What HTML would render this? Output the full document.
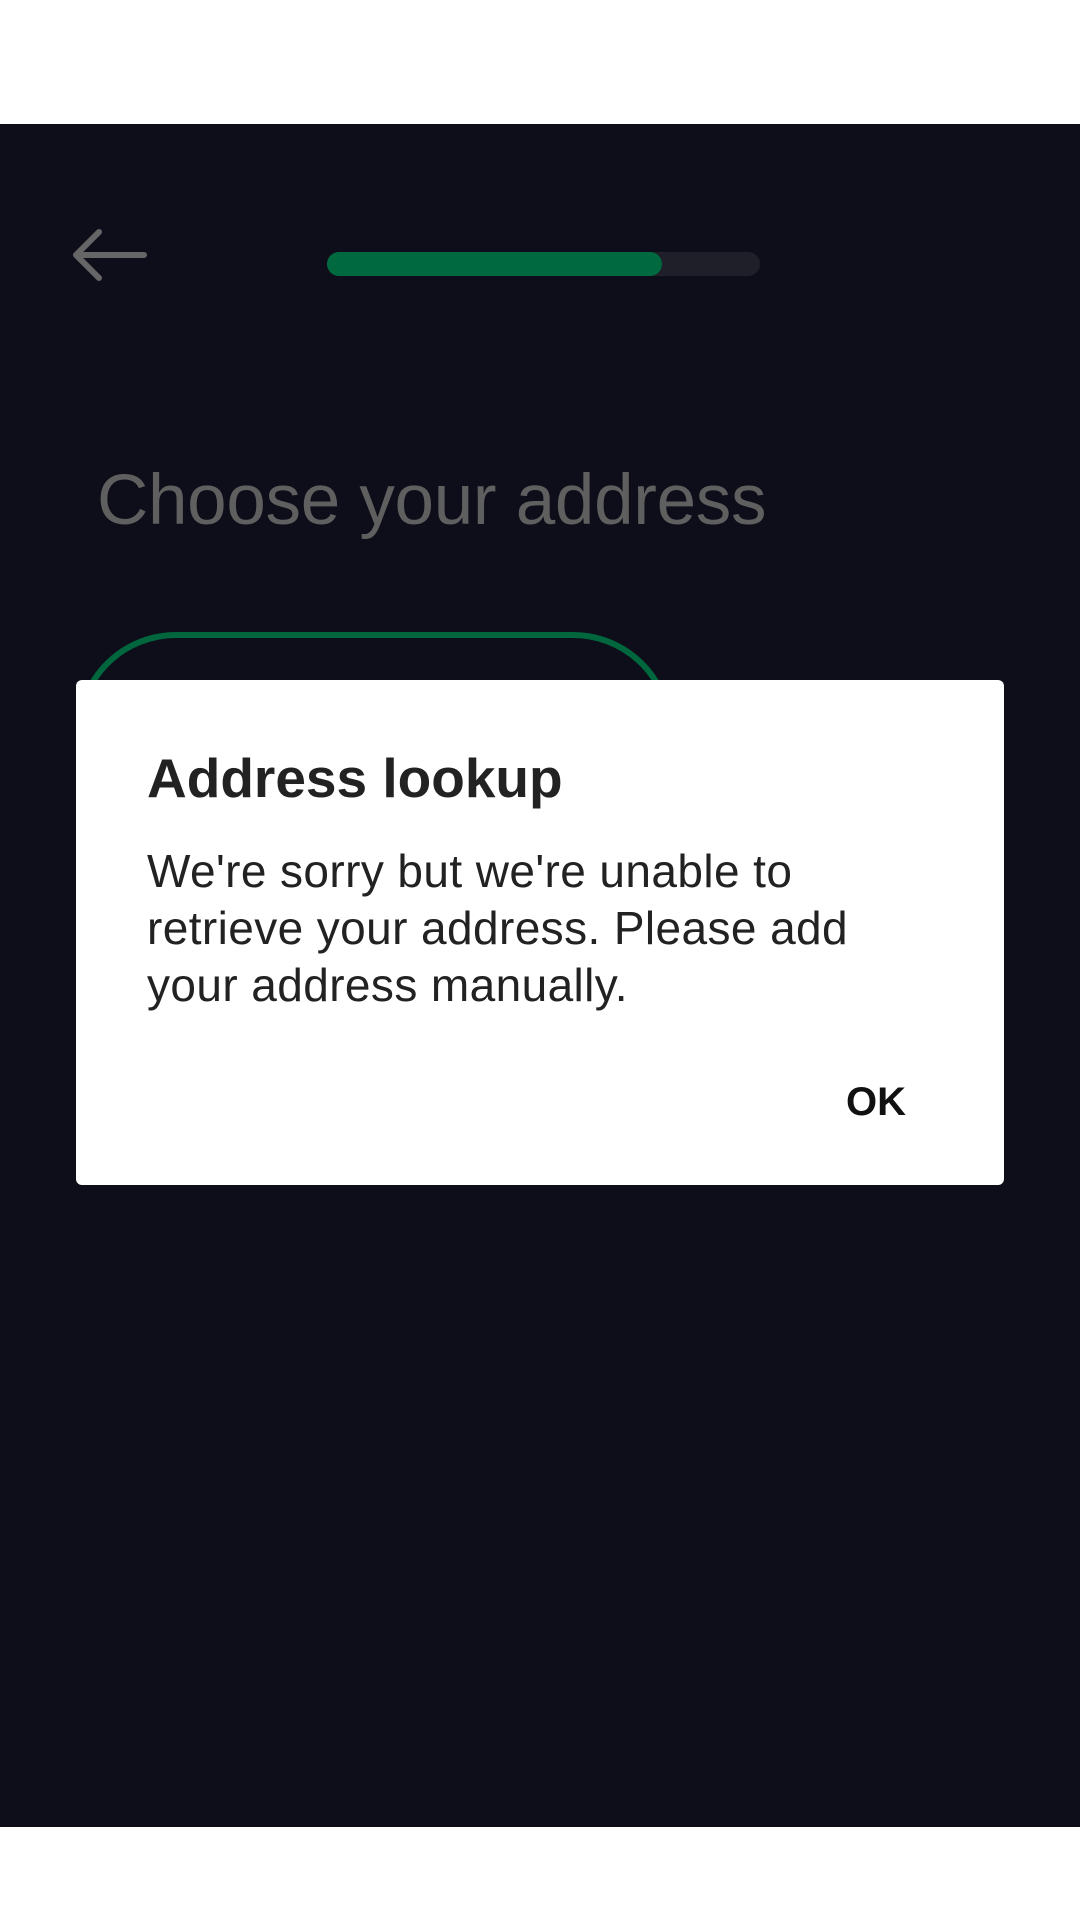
<!DOCTYPE html>
<html><head><meta charset="utf-8"><style>
html,body{margin:0;padding:0;}
body{width:1080px;height:1920px;position:relative;background:#fff;font-family:"Liberation Sans",Roboto,sans-serif;overflow:hidden;}
.dark{position:absolute;left:0;top:124px;width:1080px;height:1703px;background:#0d0e19;}
.track{position:absolute;left:327px;top:252px;width:433px;height:24px;border-radius:12px;background:#1e1f28;}
.fill{position:absolute;left:327px;top:252px;width:335px;height:24px;border-radius:12px;background:#006940;}
.title{position:absolute;left:97px;top:460px;font-size:71px;color:#5f5f5f;white-space:nowrap;letter-spacing:-0.3px;}
.btn{position:absolute;left:76px;top:632px;width:585px;height:200px;border:6px solid #00663d;border-radius:100px;}
.dlg{position:absolute;left:76px;top:680px;width:928px;height:505px;background:#fff;border-radius:6px;}
.dt{position:absolute;left:71px;top:66px;font-size:55px;font-weight:bold;color:#222;white-space:nowrap;}
.db{position:absolute;left:71px;top:163px;font-size:46px;line-height:57px;color:#222;white-space:nowrap;letter-spacing:0.4px;}
.ok{position:absolute;left:770px;top:400px;font-size:40px;font-weight:bold;color:#111;}
</style></head><body>
<div class="dark"></div>
<svg style="position:absolute;left:72px;top:228px" width="80" height="56" viewBox="0 0 80 56"><path d="M72 27 H5 M27 4 L4 27 L27 50" fill="none" stroke="#666" stroke-width="6" stroke-linecap="round" stroke-linejoin="round"/></svg>
<div class="track"></div><div class="fill"></div>
<div class="title">Choose your address</div>
<div class="btn"></div>
<div class="dlg">
<div class="dt">Address lookup</div>
<div class="db">We're sorry but we're unable to<br>retrieve your address. Please add<br>your address manually.</div>
<div class="ok">OK</div>
</div>
</body></html>
